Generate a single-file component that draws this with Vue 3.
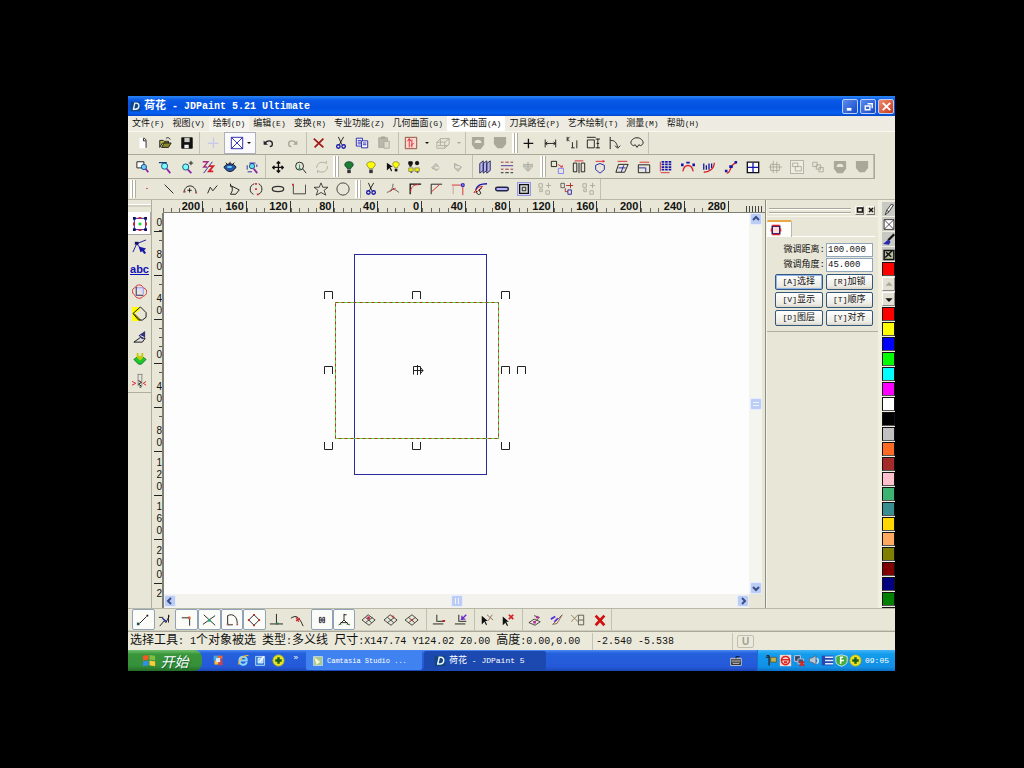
<script setup>
import { ref } from 'vue'

const K = '#111'
const R = '#d8202c'
const B = '#1818a8'
const G = '#a9a899'
const glyphs = {
  new: [['M4 2h5l3 3v9H4z', 'none', '#fff'], ['M8.5 2.5v3h3v8', K], ['M9 2l3 3', K]],
  open: [['M2 5h4l1 1h5v2H5l-3 5z', K, '#b9b84a'], ['M4 13l3-5h8l-3 5z', K, '#8a8a28'], ['M9 3c2-2 4-1 5 1', K]],
  save: [['M2 2h12v12H2z', K, K], ['M5 2h6v5H5z', 'none', '#c8c8c0'], ['M5 10h5v4H5z', 'none', '#eee']],
  cross: [['M8.5 2v12M2 8.5h12', '#c6c8ee', 'none', 1.5]],
  boxx: [['M1.5 1.5h13v13h-13zM1.5 1.5l13 13M14.500 1.500l-13 13', B, '#fff']],
  undo: [['M4 9c3-5 9-4 9 0 0 2-1 3-3 3', '#223', 'none', 1.5], ['M3 5v5h5z', 'none', '#223']],
  redo: [['M12 9c-3-5-9-4-9 0 0 2 1 3 3 3', G, 'none', 1.5], ['M13 5v5H8z', 'none', G]],
  del: [['M2 3l11 10M13 3L3 13', '#a01818', 'none', 2]],
  cut: [['M5 1l4 9M11 1L6 10', K], ['M3 12a2 2 0 1 0 4 0 2 2 0 1 0-4 0M9 12a2 2 0 1 0 4 0 2 2 0 1 0-4 0', B, 'none', 1.5]],
  copy: [['M1.500 2.500h7v9h-7z', B, '#fff'], ['M7.500 5.500h7v8h-7z', B, '#fff'], ['M3 5h4M3 7h4M3 9h4M9 8h4M9 10h4', B]],
  paste: [['M2 2h10v11H2z', G, '#b9b8aa'], ['M8 6h6v8H8z', G, '#dddccb'], ['M5 1h4v2H5z', G, G]],
  axis: [['M1.500 1.500h13v13h-13z', '#843', '#fbd8d0'], ['M6 13V3M4 6l2-3 2 3M9 4v9M11 8l-3 3', R]],
  cube: [['M1 7h9v7H1zM1 7l4-4h10l-5 4M15 3v6l-5 5M5 3v8M2 11h12', G]],
  shieldA: [['M1 1h14v9l-4 5H5l-4-5z', 'none', G], ['M4 8c0-5 8-5 8 0z', 'none', '#e8e6d8']],
  shieldB: [['M1 1h14v8l-4 5H5L1 9z', 'none', G]],
  plus: [['M8.500 3v11M3 8.500h11', K, 'none', 1.5]],
  dimH: [['M2.500 4v9M14.500 4v9M3 8.500h11M5 6.500L3 8.500l2 2M12 6.500l2 2-2 2', K]],
  dimK: [['M2.500 1v5M5 1L3 3.500 5 6M8.500 7v6M7 13.500h4M13.500 5v9', K]],
  dimBox: [['M1.500 4.500h8v9h-8zM1 1.500h10M13.500 3v11M11 3.500h5M11 13.500h5M12 8.500h3', K]],
  dimA: [['M2.500 1v14M3 5c5 0 7 3 8 8M8 11l3 3 3-3', K]],
  dimR: [['M4 11c-6-2-2-9 4-9s10 7 4 9l-2-1-2 3-2-3z', K]],
  zoomBox: [['M1 2h8v7H1z', K, '#fff'], ['M6 8a3 3 0 1 0 6 0 3 3 0 1 0-6 0', '#147', '#6cf'], ['M11 10l3 4', '#82a', 'none', 2]],
  zoomOut: [['M4 7a3.500 3.500 0 1 0 7 0 3.500 3.500 0 1 0-7 0', '#147', '#7ff'], ['M10 10l4 5', '#82a', 'none', 2], ['M1 3h9', '#147', 'none', 1.5]],
  zoomIn: [['M3 8a3.500 3.500 0 1 0 7 0 3.500 3.500 0 1 0-7 0', '#147', '#7ff'], ['M9 11l4 4', '#82a', 'none', 2], ['M10 3.500h5M12.500 1v5', K]],
  zoomZ: [['M2 2h6L3 8h4', '#a22a88', 'none', 1.5], ['M13 2L3 15', B], ['M9 7h5l-5 6h5', R, 'none', 2]],
  eye: [['M1 8c4-5 10-5 14 0-4 7-10 7-14 0z', K, '#2858a8'], ['M5 8h5', '#7df', 'none', 2], ['M3 3l3 3M8 2v3M13 3l-3 3', K]],
  zoomAll: [['M5 7a3 3 0 1 0 6 0 3 3 0 1 0-6 0', '#147', '#6de'], ['M10 10l4 5', '#82a', 'none', 2], ['M5 3.500h7M2.500 6v5M13.500 5v3M3 13.500h5', B]],
  pan: [['M8.500 2v12M2 8.500h12M6.500 4l2-2 2 2M6.500 12l2 2 2-2M4 6.500l-2 2 2 2M12 6.500l2 2-2 2', K, 'none', 1.5]],
  zoomDyn: [['M3 7a4.500 4.500 0 1 0 9 0 4.500 4.500 0 1 0-9 0M11 10l4 5', K], ['M7.500 5v5M6 10h3', '#186']],
  refresh: [['M2 9c0-6 6-8 11-5V1M14 7c1 6-6 9-11 5v3', G]],
  bulbG: [['M8 2c6 0 6 5 2 7v1H6V9C2 7 2 2 8 2z', '#143', '#1c7c30'], ['M6 11h4v4H6z', 'none', '#333']],
  bulbY: [['M8 2c6 0 6 5 2 7v1H6V9C2 7 2 2 8 2z', '#883', '#ff0'], ['M6 11h4v4H6z', 'none', '#333']],
  bulbSel: [['M11 2c5 0 5 4 2 6v1h-3V8C7 6 7 2 11 2z', '#883', '#ff0'], ['M1 3v9l3-3 2 4 1-1-2-4h3z', 'none', K], ['M10 10h3v3h-3z', 'none', K]],
  bulbs: [['M2 2h4v3H2zM10 2h3v3h-3zM3 6h2v1H3z', K, K], ['M2 9h5v4H2zM9 9h5v4H9z', '#886', '#ee0'], ['M11.500 1v5M9 3.500h5M4 14h2M11 14h2', K]],
  grayL: [['M3 9l5-5 4 5-3 3z', G, '#c9c8bb'], ['M7 9h5', '#fff']],
  grayR: [['M4 4l8 4-4 5-4-4z', G, '#c9c8bb'], ['M5 8h5', '#fff']],
  books: [['M2 4l4-3v11l-4 3zM6 4l4-3v11l-4 3zM10 4l4-3v11l-4 3z', '#225', '#b4b4ea']],
  dashes: [['M1 2.500h3m2 0h4m2 0h3M1 10.500h3m2 0h4m2 0h3', '#923'], ['M1 6.500h14', '#429'], ['M1 14.500h3m2 0h4m2 0h3', K]],
  funnel: [['M3 5h10v3H3zM4 9l4 4 4-4M8 2v10', G, '#ccc']],
  array: [['M1.500 1.500h6v6h-6z', K], ['M9.500 9.500h6v6h-6z', '#77f'], ['M9 5l5 3M12 8h2V6', R]],
  mirror: [['M1.500 3.500h4v10h-4zM10.500 3.500h4v10h-4z', K], ['M8 3v12', K], ['M3 1h10', R]],
  rotate: [['M8 4l5 2v5l-5 4-5-4V6z', B], ['M3 1.500h10M11 .5l2 1-2 1', R]],
  skew: [['M4 5h11l-4 9H1z', K], ['M4 9h8M10 6l-3 8', B], ['M3 1.500h11', R]],
  scale: [['M1.500 5.500h13v9h-13z', K], ['M2 9h8v5', B], ['M3 2.500h11', R]],
  grid: [['M3 2h3m1 0h3m1 0h3M3 5h3m1 0h3m1 0h3M3 8h3m1 0h3m1 0h3M3 11h3m1 0h3m1 0h3', B, 'none', 2], ['M1.500 2v11M2 14.500h10', R]],
  arc: [['M2 13c2-9 10-9 12 0', R, 'none', 1.5], ['M0 4h3v3H0zM6 2h4v2H6zM13 4h3v3h-3z', 'none', B]],
  fit: [['M2 4v7M5 6v5M8 4v7M11 4v5', B, 'none', 1.500], ['M2 14c6 0 12-4 12-11', R, 'none', 1.5]],
  path: [['M3 15c6 0 2-9 11-12', R, 'none', 1.5], ['M1 11h3v3H1zM6 6h4v3H6zM12 1h3v3h-3z', 'none', B]],
  window: [['M1.500 2.500h13v12h-13z', K, '#fff', 1.5], ['M8 3v11M2 8.500h12', B, 'none', 1.5]],
  grayGrid: [['M3 5h10v7H3zM6 1v14M10 2v13M1 8h15', G]],
  grayBox: [['M.500 .500h15v15h-15z', G, '#efede0'], ['M3 3.500h6v4H3zM6 7.500h7v5H6z', G]],
  grayCopy: [['M2 2.500h5v5H2zM6 5.500h5v5H6zM9 8.500h5v5H9z', G]],
  point: [['M7 8l1-1 1 1', R]],
  line: [['M3 3l10 10', K]],
  arc3: [['M1 12C2 2 14 2 15 12', K, 'none', 1], ['M5 9.500h5M7.500 7v5', K], ['M1 10h2v2H1zM14 11h2v2h-2z', 'none', '#a44']],
  poly: [['M3 13l3-7 3 4 5-6', K]],
  sector: [['M4 2v3l2 1M4 14h6l4-5-10-5M6 6v4l-2 4', K]],
  circ3: [['M6 2c-6 2-6 10-1 12M11 2c5 2 5 10 0 12', K], ['M7 2h2M7 8h2M9 14h2', R, 'none', 2]],
  ellipse: [['M1.500 8a6.500 3 0 1 0 13 0 6.500 3 0 1 0-13 0', '#333', 'none', 1.5]],
  rect: [['M1.500 3v10.500h14V3', '#333'], ['M0 2h2v2H0z', 'none', R]],
  star: [['M8 1l2 5h6l-4.500 3.500 2 5.500L8 12l-5.500 3 2-5.500L0 6h6z', '#333']],
  circle: [['M1 8a7 7 0 1 0 14 0 7 7 0 1 0-14 0', '#333']],
  trim: [['M1 12C7 10 8 6 8 2M8 7l7 5', '#555'], ['M8 8l-3 3M11 7L8 9', R]],
  fillet: [['M2.500 14V2.500H15', K, 'none', 1.5], ['M3 12c0-6 3-9 9-9', R]],
  chamfer: [['M2.500 14V2.500H15', K], ['M3 11l9-8', R]],
  extend: [['M1 3.500h11M13.500 5v10', R], ['M2.500 3v11', '#c99'], ['M12 2h3v3h-3z', B, '#88f']],
  offset: [['M3 9c2-5 5-7 13-7', B, 'none', 1.5], ['M1 12l5-6 5-1-6 6z', R], ['M4 10c0 5 3 5 5 3L7 9l3-2', K]],
  slot: [['M3 6h10c3 0 3 4 0 4H3C0 10 0 6 3 6z', '#224', '#b7b7ff', 1.500]],
  frame: [['M.500 .500h15v15H.500z', '#88d', '#d4d4f4'], ['M3 3h10v10H3z', K, '#ddd', 1.5], ['M6 6h4v4H6z', K]],
  comb: [['M1 2h4v4H1zM2 8h3v3H2zM9 10h4v4H9zM9 4h6M12 1v6', G]],
  combOn: [['M1 1.500h4v5H1z', '#555'], ['M9 9h4v5H9z', B], ['M7 4h8M12 1v6M6 7v4h3', '#a22']],
  s1: [['M4 12l8-8', K], ['M1 11h3v3H1z', 'none', '#255'], ['M12 2h2v2h-2z', 'none', K]],
  s2: [['M2 15l5-6 2 2 4-8M1 5h5M12 2v9', K], ['M5 6l5 4', B, 'none', 1.5]],
  s3: [['M2 5.500h9v9', K], ['M9 4h3v3H9z', 'none', '#c63']],
  s4: [['M2 2l13 12M15 3L1 13', K], ['M7 7h3v3H7z', 'none', '#2a7']],
  s5: [['M3 13.500V3c6-3 11 1 11 9M3 13.500h6', K], ['M2 12h2v2H2zM13 12h2v2h-2z', 'none', '#a55']],
  s6: [['M2 8l6-6 6 6-6 6z', K], ['M7 1h2v2H7zM1 7h2v2H1zM13 7h2v2h-2zM7 13h2v2H7z', 'none', '#b22']],
  s7: [['M8.500 1v12M1 12.500h15', K, 'none', 1], ['M8 11h3v2H8z', 'none', '#284']],
  s8: [['M1 6c7-5 10 0 14 9', K], ['M7 5l3 5M11 6L7 9', R, 'none', 1.5]],
  s9: [['M5 5h2v6H5zM9 5h2v6H9zM5 8h6', '#223']],
  s10: [['M8 1v7l-6 6M8 8l6 6M4 11h8M8 2h3', K], ['M2 13h3M11 13h4', '#484']],
  dia1: [['M0 8l7-6 8 6-7 6zM4 5l7 6M12 5l-8 6', '#333'], ['M6 4h3v3H6z', 'none', '#c25']],
  dia2: [['M0 8l7-6 8 6-7 6zM4 5l7 6M12 5l-8 6', '#333'], ['M9 3h2v2H9z', 'none', R]],
  dia3: [['M0 8l8-6 7 6-7 6zM4 5l7 6M12 5l-8 6', '#333'], ['M7 7h2v2H7z', 'none', R]],
  base1: [['M5.500 2v8M1 12.500h12M6 9.500h8', K], ['M12 8h3v2h-3z', 'none', '#b22']],
  base2: [['M5.500 2v8M1 12.500h12M6 9.500h8', K], ['M14 2L9 7h4M9 3v5', '#62c', 'none', 1.5]],
  ptrX: [['M2 3v10l3-3 2 4 1-1-2-4h3z', 'none', K], ['M8 2l7 6M14 2L9 9', '#865']],
  ptrR: [['M2 4v10l3-3 2 4 1-1-2-4h3z', 'none', K], ['M9 2l5 5M14 2L9 7', R, 'none', 2]],
  e1: [['M1 11l6-4 7 3-6 4zM7 3l6 2-4 4', '#433'], ['M6 9h3v3H6zM9 4h3v2H9z', 'none', '#b2a']],
  e2: [['M14 2L3 13l5-1z', '#854'], ['M1 7l5-3M5 10l4-4', '#53d', 'none', 2]],
  e3: [['M0 2l8 8M8 2L0 10', '#875'], ['M8.500 2.500h6v11h-6zM9 8h5', '#554']],
  redx: [['M3 3l10 11M13 3L3 14', '#d01010', 'none', 3]],
  select: [['M2.500 2.500h12v12h-12z', B], ['M1 1h3v3H1zM13 1h3v3h-3zM1 13h3v3H1zM13 13h3v3h-3z', 'none', '#116'], ['M7 1h3v2H7zM1 7h2v3H1zM14 7h2v3h-2zM7 14h3v2H7z', 'none', R], ['M7 7h3v3H7z', 'none', '#2d4']],
  node: [['M1 14L5 5l10-4M5 5l5 6', B], ['M3 3h4v3H3z', 'none', '#116'], ['M7 8l8 2-2 2 2 3-2 1-2-3-2 1z', 'none', B]],
  orbit: [['M3 4c3-5 8-3 9 0 6 2 4 8 0 9-3 4-8 2-9-1-4-3-3-7 0-8z', R], ['M4 4h8v7', '#99d', '#dcdcff'], ['M4.500 3v9H12', '#226']],
  measure: [['M0 1h8v4L3 8l5 5v3H0z', 'none', '#ff0'], ['M1 8l8-7 6 6v5l-4 3H7zM2 8l7 7', K]],
  pen3d: [['M2 14l7-5 5 1-3 4z', K, '#ddd'], ['M7 7l7-5v7l-3 2z', 'none', '#337'], ['M9 7l4 2', '#fff']],
  solid: [['M2 9l4-3h5l4 3-5 5H7z', '#173', '#1ec828'], ['M5 2h2v3h3V2h2v5l-3 3-4-3z', 'none', '#c3cc10']],
  drill: [['M6.500 1v13M10.500 1v13M6 1.500h5', '#888'], ['M7 8l3 2-3 2 3 2M8 15h2', K], ['M0 9l4 2-4 2M15 9l-3 2 3 2', R]],
  tab: [['M3 3h10v10H3z', '#226', '#fdd', 2], ['M3 2h10M3 14h10M2 6v4M14 6v4', R, 'none', 2]],
  pencil: [['M3 15l2-6 6-8 3 1-6 9zM5 9l3 2', K, '#eee']],
  nofill: [['M1.500 1.500h13v13h-13zM2 2l12 12M14 2L2 14', K, '#fff']],
  brush: [['M15 1L7 9', K, 'none', 3], ['M0 14l7-6 3 3-2 4z', 'none', '#2828b0']],
  picker: [['M1.500 2.500h13v12h-13z', K, '#b8bf9f', 2], ['M3 12l9-9M4 5l7 6', K, 'none', 2]],
  flag: [['M1 3l6-1v5l-6 1z', 'none', '#f05a28'], ['M8 2l6 1v5l-6-1z', 'none', '#7cc142'], ['M1 9l6-1v5l-6 1z', 'none', '#2f8fe8'], ['M8 8l6 1v5l-6-1z', 'none', '#fc3']],
  office: [['M2 2h6v6H2z', 'none', '#4ad'], ['M7 2h6v4H7z', 'none', '#e63'], ['M3 8h5v5H3z', 'none', '#fb3'], ['M8 7h5v7H8z', 'none', '#c44'], ['M5 5h5v5H5z', 'none', '#d8e8ff']],
  ie: [['M12 10c-2 5-9 4-9-2s9-6 9 0H4', '#8ad8ff', 'none', 2.500], ['M2 13C3 6 9 1 14 2', '#fb3', 'none', 1.500]],
  mail: [['M2 3h11v11H2z', '#cfe9ff', '#2a7bd4'], ['M5 5h6v6H5z', '#fff', '#9cf'], ['M7 10l5-7', '#fff', 'none', 2]],
  green: [['M1 8a7 7 0 1 0 14 0 7 7 0 1 0-14 0', '#8a4', '#f0e020'], ['M8 4v8M4 8h8', '#176020', 'none', 3]],
  cam: [['M2 2h12v12H2z', '#cde', '#a8c890'], ['M3 3l8 6-5 4z', 'none', '#f5f5d0']],
  jd: [['M1 1h14v14H1z', 'none', '#12457c'], ['M6 3h3c6 0 5 9-1 9H4M7 3L5 12', '#e8f4ff', 'none', 2]],
  keyboard: [['M2 5h12v8H2z', '#ddd', K], ['M3 7h10M3 9h10M4 11h8', '#ddd', 'none', 1], ['M8 5V3h4', K]],
  trayA: [['M5 2v12M1 4h5M2 2h3', '#222', 'none', 1.5], ['M7 4h7v6H7z', '#554', '#c8b048']],
  trayB: [['M1 1h14v14H1z', 'none', '#f4d8d0'], ['M3 8a5 5 0 1 0 10 0 5 5 0 1 0-10 0M4 7h8M6 10h4', '#d22', 'none', 2]],
  trayC: [['M2 2h7v7H2z', '#dde', '#346'], ['M6 6h7v6H6z', '#ccd', '#457'], ['M8 9l6 6M14 9l-6 6', '#d22', 'none', 2]],
  trayD: [['M3 5h3l5-3v11l-5-3H3z', '#567', '#bcc8d4'], ['M12 5c3 2 2 5 0 7', '#dde', 'none', 2]],
  trayE: [['M1 2h14v12H1z', 'none', '#2548b0'], ['M5 4h10M5 8h10M5 12h10', '#dfe9ff', 'none', 2]],
  trayF: [['M8 1l7 2v6c0 3-3 5-7 6-4-1-7-3-7-6V3z', '#eef', '#3fae3a'], ['M10 4H7v8M6 8h5', '#fff', 'none', 2]],
}

const bars = [
  { id: 'main', label: '标准', parts: [
    '', ['new', 'open', 'save'], 'sep', ['cross'], 'combo', ['undo', 'redo'], 'sep',
    ['del', 'cut', 'copy', 'paste'], 'sep', ['axis'], 'drop', ['cube'], 'dropoff', 'sep',
    ['shieldA', 'shieldB'], 'grip', ['plus', 'dimH', 'dimK', 'dimBox', 'dimA', 'dimR'], 'sep',
  ] },
  { id: 'zooms', label: '视图', parts: [
    '', ['zoomBox', 'zoomOut', 'zoomIn', 'zoomZ', 'eye', 'zoomAll'], 'sep', ['pan', 'zoomDyn', 'refresh'], 'grip',
    ['bulbG', 'bulbY', 'bulbSel', 'bulbs', 'grayL', 'grayR'], 'sep', ['books', 'dashes', 'funnel'], 'grip',
    ['array', 'mirror', 'rotate', 'skew', 'scale', 'grid', 'arc', 'fit', 'path', 'window', 'grayGrid', 'grayBox', 'grayCopy', 'shieldA', 'shieldB'], 'sep',
  ] },
  { id: 'draw', label: '绘制', parts: [
    'grip', ['point', 'line', 'arc3', 'poly', 'sector', 'circ3', 'ellipse', 'rect', 'star', 'circle'], 'grip',
    ['cut', 'trim', 'fillet', 'chamfer', 'extend', 'offset', 'slot', 'frame', 'comb', 'combOn', 'comb'], 'sep',
  ] },
]
const snapParts = [
  '', ['s1', 's2', 's3', 's4', 's5', 's6', 's7', 's8'], '', ['s9', 's10'], '', ['dia1', 'dia2', 'dia3'], 'sep',
  ['base1', 'base2'], 'sep', ['ptrX', 'ptrR'], 'sep', ['e1', 'e2', 'e3', 'redx'], 'sep',
]
const snapOn = new Set(['s1', 's3', 's4', 's5', 's6', 's9', 's10'])

const menus = [
  ['文件', 'F'], ['视图', 'V'], ['绘制', 'D', 'soft'], ['编辑', 'E'], ['变换', 'R'], ['专业功能', 'Z'],
  ['几何曲面', 'G'], ['艺术曲面', 'A', 'hot'], ['刀具路径', 'P'], ['艺术绘制', 'T'], ['测量', 'M'], ['帮助', 'H'],
]
const tools = ['select', 'node', 'abc', 'orbit', 'measure', 'pen3d', 'solid', 'drill']
const xMarks = ['200', '160', '120', '80', '40', '0', '40', '80', '120', '160', '200', '240', '280']
const yMarks = ['0', '80', '40', '0', '40', '80', '120', '160', '200']
const actions = [['A', '选择'], ['R', '加锁'], ['V', '显示'], ['T', '顺序'], ['D', '图层'], ['Y', '对齐']]
const palette = [
  '#ff0000', '#ffff00', '#0000ff', '#00ff00', '#00ffff', '#ff00ff', '#ffffff', '#000000', '#c0c0c0', '#ff6a22', '#a52a2a',
  '#ffc0cb', '#3cb371', '#388e8e', '#ffd700', '#ffa860', '#808000', '#800000', '#000080', '#008000', '#2e8b57',
]
const handles = [
  [328, 295, 't'], [416, 295, 't'], [505, 295, 't'], [328, 370, 't'], [505, 370, 't'], [521, 370, 't'],
  [328, 446, 'b'], [416, 446, 'b'], [505, 446, 'b'],
].map(([x, y, k]) => (k === 't'
  ? `M${x - 164 - 3.5} ${y - 213 + 4}v-7.5h8v7.5`
  : `M${x - 164 - 3.5} ${y - 213 - 4}v7.5h8v-7.5`))
const quick = ['office', 'ie', 'mail', 'green']
const tray = ['trayA', 'trayB', 'trayC', 'trayD', 'trayE', 'trayF', 'green']

const distance = ref('100.000')
const angle = ref('45.000')
</script>

<template>
  <div class="screen">
    <main class="window">
      <header class="title">
        <svg class="logo" viewBox="0 0 16 16"><path v-for="(p, i) in glyphs.jd" :key="i" :d="p[0]" :stroke="p[1]" :fill="p[2] || 'none'" :stroke-width="p[3] || 1" /></svg>
        <h1>荷花<span> - JDPaint 5.21 Ultimate</span></h1>
        <button class="cap" aria-label="最小化"><svg viewBox="0 0 14 14"><path d="M3 10h5" stroke="#fff" stroke-width="3" /></svg></button>
        <button class="cap" aria-label="还原"><svg viewBox="0 0 14 14"><path d="M3.500 6.500h5v4h-5zM6 4h5v5" stroke="#fff" fill="none" stroke-width="1.500" /></svg></button>
        <button class="cap close" aria-label="关闭"><svg viewBox="0 0 14 14"><path d="M3 3l8 8M11 3l-8 8" stroke="#fff" stroke-width="2" /></svg></button>
      </header>

      <nav class="menu">
        <button v-for="m in menus" :key="m[0]" :class="m[2]">{{ m[0] }}<span>({{ m[1] }})</span></button>
      </nav>

      <div v-for="bar in bars" :key="bar.id" class="bar" :class="bar.id" role="toolbar" :aria-label="bar.label">
        <template v-for="(part, n) in bar.parts" :key="n">
          <div v-if="Array.isArray(part)" class="group">
            <button v-for="(name, j) in part" :key="j" :aria-label="name">
              <svg viewBox="0 0 16 16"><path v-for="(p, i) in glyphs[name]" :key="i" :d="p[0]" :stroke="p[1]" :fill="p[2] || 'none'" :stroke-width="p[3] || 1" /></svg>
            </button>
          </div>
          <button v-else-if="part === 'combo'" class="combo" aria-label="boxx">
            <svg viewBox="0 0 16 16"><path v-for="(p, i) in glyphs.boxx" :key="i" :d="p[0]" :stroke="p[1]" :fill="p[2]" /></svg>
            <i class="caret"></i>
          </button>
          <button v-else-if="part.startsWith('drop')" class="drop" :class="part" aria-label="更多"><i class="caret"></i></button>
          <i v-else :class="part || 'gap'"></i>
        </template>
      </div>

      <section class="work">
        <aside class="toolbox">
          <div class="tools">
            <button v-for="(t, n) in tools" :key="t" :class="{ on: n === 0 }" :aria-label="t">
              <b v-if="t === 'abc'">abc</b>
              <svg v-else viewBox="0 0 16 16"><path v-for="(p, i) in glyphs[t]" :key="i" :d="p[0]" :stroke="p[1]" :fill="p[2] || 'none'" :stroke-width="p[3] || 1" /></svg>
            </button>
          </div>
        </aside>

        <div class="stage">
          <div class="xruler">
            <div v-for="(m, i) in xMarks" :key="i" class="xcell"><span>{{ m }}</span></div>
            <div class="xtail"></div>
          </div>
          <div class="yruler">
            <div v-for="(m, i) in yMarks" :key="i" class="ycell"><span v-for="(c, j) in m" :key="j">{{ c }}</span></div>
            <div class="ylast"><span>2</span></div>
          </div>
          <div class="canvas">
            <svg width="586" height="381" fill="none">
              <rect x="190.500" y="41.500" width="132" height="220" stroke="#2a2a9c" />
              <rect x="171.500" y="89.500" width="163" height="136" stroke="#55e040" />
              <rect x="171.500" y="89.500" width="163" height="136" stroke="#b03c20" stroke-dasharray="3 3" />
              <path v-for="(d, i) in handles" :key="i" :d="d" stroke="#222" />
              <path d="M249.500 153.500h7v8M249.500 153.500v8M249 157.500h10M253.500 152v10M257 155l2 2.500-2 2.500" stroke="#222" />
            </svg>
          </div>
          <div class="vscroll">
            <button aria-label="向上"><svg viewBox="0 0 10 10"><path d="M2 6l3-3 3 3" /></svg></button>
            <button class="thumb" aria-label="垂直滚动"><svg viewBox="0 0 10 10"><path d="M2 3.500h6M2 6.500h6" /></svg></button>
            <button aria-label="向下"><svg viewBox="0 0 10 10"><path d="M2 4l3 3 3-3" /></svg></button>
          </div>
          <div class="hscroll">
            <button aria-label="向左"><svg viewBox="0 0 10 10"><path d="M6 2L3 5l3 3" /></svg></button>
            <button class="thumb" aria-label="水平滚动"><svg viewBox="0 0 10 10"><path d="M3.500 2v6M6.500 2v6" /></svg></button>
            <button aria-label="向右"><svg viewBox="0 0 10 10"><path d="M4 2l3 3-3 3" /></svg></button>
          </div>
        </div>

        <aside class="panel">
          <div class="phead">
            <i></i>
            <button aria-label="停靠"><svg viewBox="0 0 8 8"><path d="M1.500 2h5v4h-5z" stroke="#111" fill="none" stroke-width="1.500" /></svg></button>
            <button aria-label="关闭面板"><svg viewBox="0 0 8 8"><path d="M2 2l4 4M6 2L2 6" stroke="#111" stroke-width="1.500" /></svg></button>
          </div>
          <div class="tabs"><button aria-label="tab"><svg viewBox="0 0 16 16"><path v-for="(p, i) in glyphs.tab" :key="i" :d="p[0]" :stroke="p[1]" :fill="p[2] || 'none'" :stroke-width="p[3] || 1" /></svg></button></div>
          <form class="form" @submit.prevent>
            <div class="field"><label for="dist">微调距离:</label><input id="dist" v-model="distance" type="text" /></div>
            <div class="field"><label for="ang">微调角度:</label><input id="ang" v-model="angle" type="text" /></div>
            <div class="acts">
              <button v-for="(a, i) in actions" :key="a[0]" type="button" :class="{ def: i === 0 }"><span>[{{ a[0] }}]</span>{{ a[1] }}</button>
            </div>
          </form>
        </aside>

        <aside class="palette">
          <button v-for="n in ['pencil', 'nofill', 'brush', 'picker']" :key="n" class="tool" :aria-label="n">
            <svg viewBox="0 0 16 16"><path v-for="(p, i) in glyphs[n]" :key="i" :d="p[0]" :stroke="p[1]" :fill="p[2] || 'none'" :stroke-width="p[3] || 1" /></svg>
          </button>
          <button class="sw cur" aria-label="当前颜色"></button>
          <button class="arrow off" aria-label="上一页"><svg viewBox="0 0 10 10"><path d="M2 6h6L5 3z" /></svg></button>
          <button class="arrow" aria-label="下一页"><svg viewBox="0 0 10 10"><path d="M2 4h6L5 7z" /></svg></button>
          <button v-for="c in palette" :key="c" class="sw" :style="{ backgroundColor: c }" :aria-label="c"></button>
        </aside>
      </section>

      <div class="bar snap" role="toolbar" aria-label="捕捉">
        <template v-for="(part, n) in snapParts" :key="n">
          <div v-if="Array.isArray(part)" class="group">
            <button v-for="name in part" :key="name" :class="{ on: snapOn.has(name) }" :aria-label="name">
              <svg viewBox="0 0 16 16"><path v-for="(p, i) in glyphs[name]" :key="i" :d="p[0]" :stroke="p[1]" :fill="p[2] || 'none'" :stroke-width="p[3] || 1" /></svg>
            </button>
          </div>
          <i v-else :class="part || 'gap'"></i>
        </template>
      </div>

      <footer class="status">
        <p class="info">选择工具<span>: 1</span>个对象被选<span>&nbsp;</span>类型<span>:</span>多义线<span>&nbsp;</span>尺寸<span>:X147.74 Y124.02 Z0.00&nbsp;</span>高度<span>:0.00,0.00</span></p>
        <p class="coord"><span>-2.540 -5.538</span></p>
        <p class="lock"><b>U</b></p>
      </footer>

      <footer class="taskbar">
        <button class="start"><svg viewBox="0 0 16 16"><path v-for="(p, i) in glyphs.flag" :key="i" :d="p[0]" :fill="p[2]" /></svg>开始</button>
        <div class="quick">
          <button v-for="q in quick" :key="q" :aria-label="q"><svg viewBox="0 0 16 16"><path v-for="(p, i) in glyphs[q]" :key="i" :d="p[0]" :stroke="p[1]" :fill="p[2] || 'none'" :stroke-width="p[3] || 1" /></svg></button>
          <small>»</small>
        </div>
        <button class="task"><svg viewBox="0 0 16 16"><path v-for="(p, i) in glyphs.cam" :key="i" :d="p[0]" :stroke="p[1]" :fill="p[2]" /></svg><span class="tiny">Camtasia Studio ...</span></button>
        <button class="task active"><svg viewBox="0 0 16 16"><path v-for="(p, i) in glyphs.jd" :key="i" :d="p[0]" :stroke="p[1]" :fill="p[2]" :stroke-width="p[3] || 1" /></svg>荷花<span> - JDPaint 5</span></button>
        <button class="kbd" aria-label="键盘"><svg viewBox="0 0 16 16"><path v-for="(p, i) in glyphs.keyboard" :key="i" :d="p[0]" :stroke="p[1]" :fill="p[2] || 'none'" /></svg></button>
        <div class="tray">
          <svg v-for="t in tray" :key="t" viewBox="0 0 16 16"><path v-for="(p, i) in glyphs[t]" :key="i" :d="p[0]" :stroke="p[1]" :fill="p[2] || 'none'" :stroke-width="p[3] || 1" /></svg>
          <time>09:05</time>
        </div>
      </footer>
    </main>
  </div>
</template>

<style>
body { margin: 0; background: #000; }
</style>

<style scoped>
* { box-sizing: border-box; }
button { margin: 0; padding: 0; border: 0; background: none; font: inherit; color: inherit; display: flex; align-items: center; justify-content: center; min-width: 0; }
svg { display: block; flex: none; }
p, h1 { margin: 0; }
.screen { height: 100vh; padding: 96px 129px 97px 128px; display: flex; background: #000; color: #111; }
.window { flex: 1; min-width: 0; min-height: 0; display: flex; flex-direction: column; overflow: hidden; background: #e8e6d6; font: 9px/12px "Liberation Mono", "Noto Sans CJK SC", monospace; white-space: nowrap; }

.title { height: 20px; flex: none; display: flex; align-items: center; gap: 2px; padding: 0 1px 0 2px; color: #fff; background: linear-gradient(#2a86f4 0, #0a5ae8 20%, #0250e0 60%, #0560f4 85%, #0347c4); }
.title h1 { flex: 1; margin-left: 1px; font-size: 11px; line-height: 16px; font-weight: bold; }
.title h1 span { font-size: 10px; }
.logo { width: 11px; height: 11px; }
.cap { width: 16px; height: 15px; border: 1px solid #b8cdf8; border-radius: 2px; background: linear-gradient(135deg, #5a8cf0, #1848c8); }
.cap svg { width: 13px; height: 13px; }
.cap.close { background: linear-gradient(135deg, #f08c70, #c83818); }

.menu { height: 16px; flex: none; display: flex; background: #eeece2; border-bottom: 1px solid #f8f7f0; }
.menu button { padding: 0 4px; white-space: pre; }
.menu span, .acts span { font-size: 8px; }
.menu .soft { background: #f5f4ee; }
.menu .hot { background: #fff; }

.bar { flex: none; display: grid; align-items: stretch; background: #e8e6d6; }
.bar.main { height: 22px; grid-template-columns: 4px 66px 3px 23px 32px 49px 3px 87px 5px 22px 10px 22px 9px 4px 44px 6px 131px 2px 1fr; }
.bar.zooms { height: 25px; align-self: flex-start; border: solid #a9a899; border-width: 1px 1px 1px 0; grid-template-columns: 4px 131px 4px 66px 5px 131px 5px 65px 7px 327px 1px; }
.bar.draw { height: 21px; border-bottom: 1px solid #b9b8a8; grid-template-columns: 8px 218px 6px 240px 2px 1fr; }
.bar.snap { height: 23px; border-top: 1px solid #b9b8a8; border-bottom: 1px solid #d0cebe; grid-template-columns: 4px 175px 4px 44px 3px 65px 5px 44px 4px 43px 5px 87px 2px 1fr; }
.group { display: flex; }
.group button { flex: 1; }
.group svg, .combo svg { width: 14px; height: 14px; }
.sep { border-right: 1px solid #c2c0b0; margin-right: 1px; }
.grip { border-left: 2px solid #fff; border-right: 2px solid #fff; box-shadow: 1px 0 0 #b0ae9e, inset 1px 0 0 #b0ae9e; justify-self: center; width: 5px; margin: 1px 0; }
.combo { border: 1px solid #b0b0b8; background: #fafafc; gap: 3px; }
.caret { width: 0; height: 0; border: 2px solid transparent; border-top-color: #111; margin-top: 1px; }
.dropoff .caret { border-top-color: #a9a899; }
.snap .on { border: 1px solid #8fa2b8; background: #fbfbf8; border-radius: 2px; }

.work { flex: 1; min-height: 0; display: grid; grid-template-columns: 24px minmax(0, 1fr) 115px 14px; grid-template-rows: minmax(0, 1fr); }
.toolbox { border-right: 1px solid #b0ae9e; padding-top: 4px; background: #e8e6d6; }
.tools { height: 189px; padding-top: 7px; display: flex; flex-direction: column; border-top: 1px solid #fff; border-bottom: 1px solid #b0ae9e; box-shadow: inset 0 2px 0 #d2d0c0; }
.tools button { flex: 1; }
.tools .on { background: #fff; border-right: 1px solid #a8a8a0; border-bottom: 1px solid #a8a8a0; }
.tools svg { width: 15px; height: 15px; }
.tools b { font: bold 11px/12px "Liberation Sans", sans-serif; color: #1010b8; text-decoration: underline; }

.stage { display: grid; grid-template-columns: 12px minmax(0, 1fr) 13px 3px; grid-template-rows: 13px minmax(0, 1fr) 14px; border-right: 1px solid #8d8c80; min-height: 0; }
.xruler { grid-column: 1 / -1; margin-left: 11px; padding-top: 1px; display: grid; grid-template-columns: 40px repeat(12, minmax(0, 1fr)) 36px; border-bottom: 1px solid #807f72; font: bold 11px/11px "Liberation Sans", sans-serif; }
.xcell { display: flex; justify-content: flex-end; border-right: 1px solid #333; padding-right: 2px; background: repeating-linear-gradient(to left, transparent 0 calc(20% - 1px), #666 calc(20% - 1px) 20%) 0 100% / 100% 4px no-repeat; }
.xcell span { background: #e8e6d6; padding-left: 2px; }
.xtail { margin: 5px 2px 0 17px; background: repeating-linear-gradient(to right, #444 0 1px, transparent 1px 3px); }
.yruler { grid-column: 1; grid-row: 2 / 4; min-height: 0; overflow: hidden; border-right: 2px solid #807f72; display: grid; grid-template-rows: 19px repeat(8, 44px) 1fr; font: 10px/12px "Liberation Sans", sans-serif; }
.ycell { display: flex; flex-direction: column; align-items: flex-end; justify-content: flex-end; margin-left: 2px; border-bottom: 1px solid #222; padding-bottom: 2px; overflow: hidden; background: repeating-linear-gradient(to bottom, transparent 0 8px, #555 8px 9px) 100% 0 / 3px 100% no-repeat; }
.ycell span { flex: none; background: #e8e6d6; }
.ylast { display: flex; justify-content: flex-end; padding-top: 4px; }
.canvas { grid-column: 2; grid-row: 2; background: #fdfdfd; overflow: hidden; min-height: 0; }
.vscroll, .hscroll { display: flex; justify-content: space-between; align-items: center; background: #f5f5f0; }
.vscroll { grid-column: 3; grid-row: 2; flex-direction: column; }
.vscroll button, .hscroll button { width: 12px; height: 12px; border: 1px solid #e4ecff; border-radius: 2px; background: #bccdf5; }
.vscroll svg, .hscroll svg { width: 10px; height: 10px; stroke: #3a4f88; stroke-width: 2; fill: none; }
.vscroll .thumb svg, .hscroll .thumb svg { stroke: #eef3ff; stroke-width: 1; }
.hscroll { grid-column: 2; grid-row: 3; background: #f3f2ec; }

.panel { border-left: 1px solid #f5f4ea; border-right: 3px solid #f2efdf; padding-top: 4px; }
.phead { height: 13px; display: flex; align-items: center; gap: 2px; padding: 0 3px 0 2px; border-bottom: 1px solid #f6f5ec; }
.phead i { flex: 1; height: 5px; margin-right: 2px; border-top: 1px solid #a9a899; border-bottom: 1px solid #a9a899; box-shadow: inset 0 1px 0 #fff, 0 1px 0 #fff; }
.phead button { width: 9px; height: 9px; border: 1px solid #f8f7f0; border-right-color: #777; border-bottom-color: #777; }
.phead svg { width: 8px; height: 8px; }
.tabs { height: 20px; padding-top: 3px; border-bottom: 1px solid #fff; margin-right: 3px; }
.tabs button { width: 25px; height: 17px; padding-right: 6px; background: #fdfdfa; border-top: 2px solid #e8a848; border-right: 1px solid #b8b7a8; border-radius: 2px 2px 0 0; }
.tabs svg { width: 12px; height: 12px; }
.form { padding: 5px 5px 5px 8px; border-bottom: 1px solid #b0ae9e; }
.field { height: 15px; display: flex; justify-content: flex-end; align-items: center; gap: 1px; }
.field input { width: 47px; height: 14px; padding: 0 1px; border: 1px solid #8fa6bd; background: #fff; color: #111; font: 9px/12px "Liberation Mono", monospace; }
.acts { margin-top: 2px; display: grid; grid-template-columns: 1fr 1fr; gap: 2px 3px; }
.acts button { height: 16px; border: 1px solid #34587c; border-radius: 2px; background: linear-gradient(#fff, #ecebe4 80%, #d8d4c8); }
.acts .def { box-shadow: inset 0 0 0 1px #8fb4f0; }

.palette { overflow: hidden; min-height: 0; padding: 2px 0 0 1px; display: flex; flex-direction: column; gap: 1px; background: #efece0; }
.palette button { flex: none; height: 14px; }
.palette svg { width: 12px; height: 13px; }
.palette .tool { background: #c9c9c4; }
.palette .sw { border: 1px solid #111; border-bottom-color: #555; }
.cur { background: #f00; }
.palette .arrow { border: 1px solid #fff; border-right-color: #888; border-bottom-color: #888; background: #e2e0d2; }
.arrow svg { fill: #111; }
.arrow.off svg { fill: #a9a899; }

.status { height: 19px; flex: none; display: grid; grid-template-columns: 465px 140px 1fr; align-items: center; border-top: 1px solid #a9a899; background: #ebe9da; font-size: 12px; line-height: 16px; }
.status span { font-size: 10px; white-space: pre; }
.info { padding-left: 2px; border-right: 1px solid #c4c2b2; }
.coord { padding-left: 3px; border-right: 1px solid #c4c2b2; }
.lock { padding-left: 4px; display: flex; }
.lock b { width: 17px; height: 13px; font: bold 10px/11px "Liberation Sans", sans-serif; text-align: center; color: #a0a090; border: 1px solid #c0beb0; border-radius: 2px; }

.taskbar { height: 21px; flex: none; display: grid; grid-template-columns: 74px 104px 118px 124px 1fr 138px; align-items: stretch; color: #fff; background: linear-gradient(#4d8cf4 0, #2560dc 15%, #2459d8 80%, #1d48b4); }
.start { gap: 4px; font: italic 14px/16px "Noto Sans CJK SC", sans-serif; border-radius: 0 8px 8px 0; background: linear-gradient(#6fc06c 0, #3a963a 20%, #35903a 75%, #256c28); text-shadow: 1px 1px 1px #163; }
.start svg { width: 15px; height: 15px; }
.quick { display: grid; grid-template-columns: 32px 18px 17px 18px 18px; align-items: center; }
.quick svg { width: 13px; height: 13px; }
.quick small { font-size: 8px; line-height: 8px; text-align: center; padding-bottom: 6px; }
.task { justify-content: flex-start; gap: 3px; padding-left: 6px; margin: 1px 2px 1px 0; border-radius: 2px; background: #3f82f0; white-space: pre; }
.task svg { width: 12px; height: 12px; }
.task span { font-size: 8px; margin-left: -3px; }
.task .tiny { font-size: 7px; margin-left: 0; }
.task.active { background: #1c49b0; padding-left: 10px; }
.kbd { justify-content: flex-end; padding-right: 14px; }
.kbd svg { width: 14px; height: 14px; }
.tray { display: flex; align-items: center; gap: 1px; padding-left: 7px; border-left: 1px solid #1a6cd0; background: linear-gradient(#3fb4f8 0, #149cec 20%, #1190e6 80%, #0c70c4); }
.tray svg { width: 13px; height: 13px; }
.tray time { margin-left: 2px; font-size: 8px; }
</style>
